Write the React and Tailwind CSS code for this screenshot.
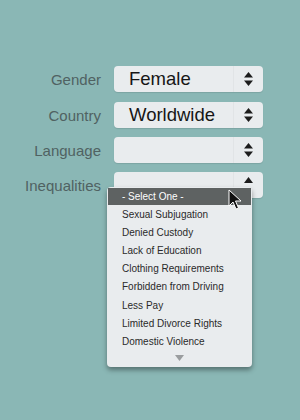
import React from 'react';

const font = { fontFamily: '"Liberation Sans", Arial, sans-serif' };

const Updown = () => (
  <svg width="9" height="14" viewBox="0 0 9 14" className="block">
    <path d="M4.5 0 L9 5.5 L0 5.5 Z" fill="#1c1c1c" />
    <path d="M4.5 14 L9 8.5 L0 8.5 Z" fill="#1c1c1c" />
  </svg>
);

const SelectBox = ({ value, up }) => (
  <div className="ml-[13px] w-[149px] h-[26px] flex bg-[#e9ecee] rounded-[4px] shadow-[0_1px_1px_rgba(0,0,0,0.1)]">
    <div className="flex-1 flex items-center pl-[15px] text-[18.5px] text-[#161616] leading-none">{value}</div>
    <div className="w-[30px] border-l border-[#e1e4e6] flex items-center justify-center">
      {up ? (
        <svg width="9" height="7" viewBox="0 0 9 7" className="block -mt-[10px]">
          <path d="M4.5 0 L9 6 L0 6 Z" fill="#1c1c1c" />
        </svg>
      ) : (
        <Updown />
      )}
    </div>
  </div>
);

const Row = ({ label, value, up, className = '' }) => (
  <div className={`flex items-center h-[26px] ${className}`}>
    <div className="w-[101px] text-right text-[15px] text-[#506262] leading-none">{label}</div>
    <SelectBox value={value} up={up} />
  </div>
);

const items = [
  'Sexual Subjugation',
  'Denied Custody',
  'Lack of Education',
  'Clothing Requirements',
  'Forbidden from Driving',
  'Less Pay',
  'Limited Divorce Rights',
  'Domestic Violence',
];

export default function App() {
  return (
    <div className="relative w-[300px] h-[420px] bg-[#8ab7b5] overflow-hidden" style={font}>
      <div className="pt-[66px] flex flex-col">
        <Row label="Gender" value="Female" />
        <Row label="Country" value="Worldwide" className="mt-[10px]" />
        <Row label="Language" value="" className="mt-[9px]" />
        <Row label="Inequalities" value="" up className="mt-[9px]" />
      </div>

      {/* open dropdown */}
      <div className="absolute left-[107px] top-[187px] w-[145px] h-[180px] bg-[#e9ecee] rounded-[4px] shadow-[0_3px_5px_rgba(0,0,0,0.38)] pt-[1px]">
        <div className="mx-[1px] h-[17px] bg-[#5e6262] text-white text-[10px] flex items-center pl-[14px]">- Select One -</div>
        {items.map((t) => (
          <div key={t} className="h-[18.2px] flex items-center pl-[15px] text-[10px] text-[#2a2a2a]">{t}</div>
        ))}
        <div className="flex justify-center pt-[4px]">
          <svg width="9" height="6" viewBox="0 0 9 6" className="block">
            <path d="M0 0 L9 0 L4.5 6 Z" fill="#9a9d9f" />
          </svg>
        </div>
      </div>

      {/* cursor */}
      <svg className="absolute left-[228px] top-[189px]" width="14" height="22" viewBox="0 0 14 22">
        <path d="M1 1 L1 17 L5 13 L8 20 L10.5 19 L7.5 12 L13 12 Z" fill="#111" stroke="#fff" strokeWidth="1" strokeLinejoin="round" />
      </svg>
    </div>
  );
}
